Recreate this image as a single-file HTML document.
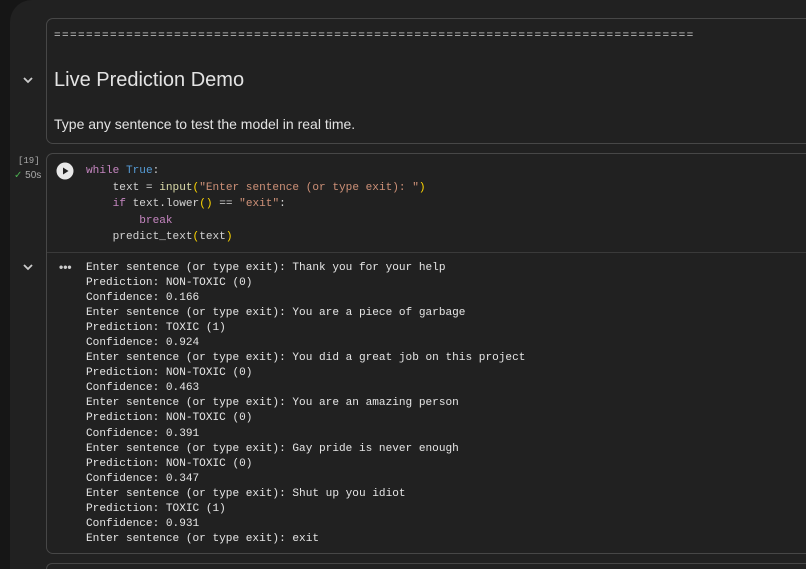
<!DOCTYPE html>
<html style="overflow:hidden"><head><style>
html,body{margin:0;width:806px;height:569px;overflow:hidden}
body{background:#161616;font-family:"Liberation Sans",sans-serif;position:relative}
.main{position:absolute;left:10px;top:0;width:796px;height:569px;background:#212121;border-top-left-radius:22px}
.cell{position:absolute;border:1px solid #474747;border-radius:7px;box-sizing:border-box}
.mono{font-family:"Liberation Mono",monospace;font-size:11.1px;white-space:pre;color:#d4d4d4}
.kw{color:#c586c0}.bl{color:#569cd6}.fn{color:#dcdcaa}.st{color:#ce9178}.pr{color:#ffd700}
</style></head><body>
<div class="main"></div>
<div class="cell" style="left:46px;top:18px;width:770px;height:126px;border-right:none;border-radius:7px 0 0 7px;width:760px"></div>
<div class="mono" style="position:absolute;left:54px;top:30px;color:#ccc;letter-spacing:1.35px">================================================================================</div>
<svg style="position:absolute;left:22px;top:75px" width="12" height="10"><path d="M2 3l4 4 4-4" stroke="#ccc" stroke-width="1.8" fill="none"/></svg>
<div style="position:absolute;left:54px;top:69px;font-size:20px;color:#e3e3e3">Live Prediction Demo</div>
<div style="position:absolute;left:54px;top:116px;font-size:14px;color:#e3e3e3">Type any sentence to test the model in real time.</div>

<div class="cell" style="left:46px;top:153px;width:760px;height:401px;border-right:none;border-radius:7px 0 0 7px"></div>
<div style="position:absolute;left:47px;top:252px;width:759px;height:1px;background:#3a3a3a"></div>
<div class="mono" style="position:absolute;left:18px;top:156px;font-size:9px;color:#aaa">[19]</div>
<div style="position:absolute;left:14px;top:170px;font-size:10px;color:#aaa"><span style="color:#4caf50">✓</span> 50s</div>
<svg style="position:absolute;left:56px;top:162px" width="18" height="18"><circle cx="9" cy="9" r="8.5" fill="#e8e8e8"/><path d="M7 5.5v7l5.5-3.5z" fill="#212121"/></svg>
<div class="mono" style="position:absolute;left:86px;top:163px;line-height:16.6px"><span class="kw">while</span> <span class="bl">True</span>:
    text = <span class="fn">input</span><span class="pr">(</span><span class="st">"Enter sentence (or type exit): "</span><span class="pr">)</span>
    <span class="kw">if</span> text.lower<span class="pr">()</span> == <span class="st">"exit"</span>:
        <span class="kw">break</span>
    predict_text<span class="pr">(</span>text<span class="pr">)</span></div>
<svg style="position:absolute;left:22px;top:262px" width="12" height="10"><path d="M2 3l4 4 4-4" stroke="#ccc" stroke-width="1.8" fill="none"/></svg>
<div style="position:absolute;left:59px;top:260px;color:#ccc;font-size:12px;font-weight:bold">•••</div>
<div class="mono" style="position:absolute;left:86px;top:261px;line-height:15.05px;color:#e6e6e6">Enter sentence (or type exit): Thank you for your help
Prediction: NON-TOXIC (0)
Confidence: 0.166
Enter sentence (or type exit): You are a piece of garbage
Prediction: TOXIC (1)
Confidence: 0.924
Enter sentence (or type exit): You did a great job on this project
Prediction: NON-TOXIC (0)
Confidence: 0.463
Enter sentence (or type exit): You are an amazing person
Prediction: NON-TOXIC (0)
Confidence: 0.391
Enter sentence (or type exit): Gay pride is never enough
Prediction: NON-TOXIC (0)
Confidence: 0.347
Enter sentence (or type exit): Shut up you idiot
Prediction: TOXIC (1)
Confidence: 0.931
Enter sentence (or type exit): exit</div>
<div style="position:absolute;left:46px;top:563px;width:760px;height:6px;border:1px solid #474747;border-bottom:none;border-right:none;border-radius:7px 0 0 0;box-sizing:border-box"></div>
</body></html>
